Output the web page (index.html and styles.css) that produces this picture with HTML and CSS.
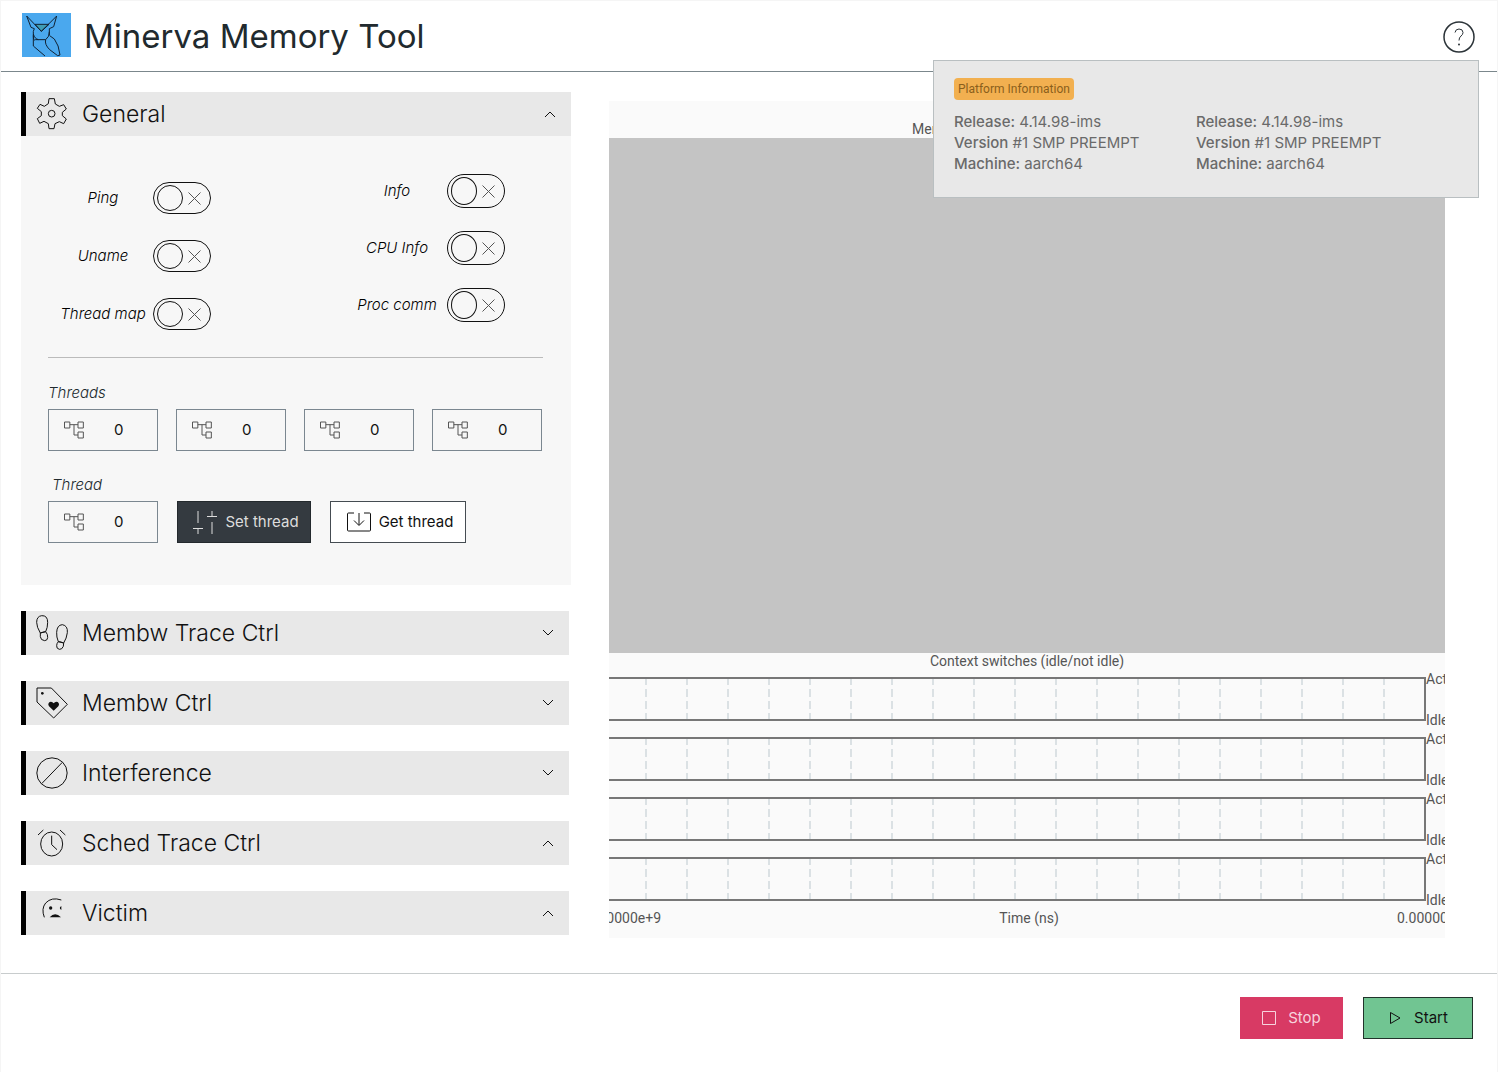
FILE: index.html
```html
<!DOCTYPE html>
<html lang="en">
<head>
<meta charset="utf-8">
<meta name="viewport" content="width=device-width, initial-scale=1">
<title>Minerva Memory Tool</title>
<link rel="stylesheet" href="styles.css">
</head>
<body>
<svg class="sprite" aria-hidden="true">
  <symbol id="tree" viewBox="0 0 60 54"><path d="M1.500 3h16v18h-16zM42 3h16v18h-16zM42 33h16v18h-16zM17.500 11H42M30 11v31h12"/></symbol>
  <symbol id="cross" viewBox="0 0 13 13"><path d="M.5.5l12 12M12.500.5l-12 12"/></symbol>
  <symbol id="down" viewBox="0 0 12 8"><path d="M1 1l5 5 5-5"/></symbol>
  <symbol id="up" viewBox="0 0 12 8"><path d="M1 7l5-5 5 5"/></symbol>
</svg>

<div class="page">
  <header class="topbar">
    <svg class="logo" viewBox="66 39 147 132" aria-hidden="true">
      <rect class="logo-bg" x="66" y="39" width="147" height="132"/>
      <path class="logo-face" d="M105 73h42l-23 21z"/>
      <path d="M80 48l13 34 10 4-3 8v44l35 30M80 48l44 46 46-46-9 32-13 6v20M100 102q4 15 16 17h21q12-9 11-24M100 106q0 18 6 13h10M137 119q-4 14 12 30l24 18 7-2q-3-30-17-48l-14-10"/>
    </svg>
    <h1 class="title">Minerva Memory Tool</h1>
    <button class="help" type="button" aria-label="Platform information">
      <svg viewBox="0 0 32 32" aria-hidden="true"><circle cx="16" cy="16" r="15"/><path d="M12 11.500q.5-3.500 4-3.500 4 0 4 3.500 0 2-2 3.500-2 1.500-2 4.500"/><circle class="dot" cx="16" cy="23.500" r="1"/></svg>
    </button>
    <aside class="popover">
      <span class="badge">Platform Information</span>
      <div class="popover-columns">
        <ul class="facts">
          <li><b>Release:</b> 4.14.98-ims</li>
          <li><b>Version</b> #1 SMP PREEMPT</li>
          <li><b>Machine:</b> aarch64</li>
        </ul>
        <ul class="facts">
          <li><b>Release:</b> 4.14.98-ims</li>
          <li><b>Version</b> #1 SMP PREEMPT</li>
          <li><b>Machine:</b> aarch64</li>
        </ul>
      </div>
    </aside>
  </header>

  <main class="content">
    <div class="panels">
      <section class="panel panel-open">
        <h2><button class="panel-head" type="button" aria-expanded="true">
          <svg class="panel-icon" viewBox="111 294 96 96" aria-hidden="true"><path d="M150 296h16l3 16 12 7 13-5 8 13-12 10v10l12 10-8 14-13-6-13 6-3 15h-15l-2-15-13-7-13 6-7-14 12-9v-12l-12-10 8-12 13 6 12-8z"/><circle cx="158" cy="341" r="10"/></svg>
          <span>General</span>
          <svg class="chevron" aria-hidden="true"><use href="#up"/></svg>
        </button></h2>
        <div class="panel-body">
          <div class="switches">
            <div class="switch-list switch-list-left">
              <label class="switch"><span>Ping</span><span class="toggle"><input type="checkbox"><svg aria-hidden="true"><use href="#cross"/></svg></span></label>
              <label class="switch"><span>Uname</span><span class="toggle"><input type="checkbox"><svg aria-hidden="true"><use href="#cross"/></svg></span></label>
              <label class="switch"><span>Thread map</span><span class="toggle"><input type="checkbox"><svg aria-hidden="true"><use href="#cross"/></svg></span></label>
            </div>
            <div class="switch-list switch-list-right">
              <label class="switch"><span>Info</span><span class="toggle"><input type="checkbox"><svg aria-hidden="true"><use href="#cross"/></svg></span></label>
              <label class="switch"><span>CPU Info</span><span class="toggle"><input type="checkbox"><svg aria-hidden="true"><use href="#cross"/></svg></span></label>
              <label class="switch"><span>Proc comm</span><span class="toggle"><input type="checkbox"><svg aria-hidden="true"><use href="#cross"/></svg></span></label>
            </div>
          </div>
          <hr class="divider">
          <div class="field">
            <label class="field-label" for="threads-1">Threads</label>
            <div class="field-row">
              <span class="number"><svg aria-hidden="true"><use href="#tree"/></svg><input id="threads-1" type="text" inputmode="numeric" value="0"></span>
              <span class="number"><svg aria-hidden="true"><use href="#tree"/></svg><input aria-label="Threads 2" type="text" inputmode="numeric" value="0"></span>
              <span class="number"><svg aria-hidden="true"><use href="#tree"/></svg><input aria-label="Threads 3" type="text" inputmode="numeric" value="0"></span>
              <span class="number"><svg aria-hidden="true"><use href="#tree"/></svg><input aria-label="Threads 4" type="text" inputmode="numeric" value="0"></span>
            </div>
          </div>
          <div class="field">
            <label class="field-label field-label-single" for="thread">Thread</label>
            <div class="field-row field-row-actions">
              <span class="number"><svg aria-hidden="true"><use href="#tree"/></svg><input id="thread" type="text" inputmode="numeric" value="0"></span>
              <button class="button button-dark" type="button">
                <svg class="button-icon" viewBox="0 0 24 24" aria-hidden="true"><path d="M5 1v12M5 19v5M0 18.500h10M19 1v5M14 6.500h10M19 12v12"/></svg>
                Set thread
              </button>
              <button class="button button-light" type="button">
                <svg class="button-icon" viewBox="0 0 24 24" aria-hidden="true"><path d="M7 3H1.500q-1 0-1 1v16q0 1 1 1h21q1 0 1-1V4q0-1-1-1H17M12 3v12M7 10.500l5 5 5-5"/></svg>
                Get thread
              </button>
            </div>
          </div>
        </div>
      </section>

      <section class="panel">
        <h2><button class="panel-head" type="button" aria-expanded="false">
          <svg class="panel-icon panel-icon-tall" viewBox="62 46 96 108" aria-hidden="true"><path d="M75 100q-11-18-11-32 0-18 15-20 18-1 18 20 0 16-6 28zM91 96q7 8 6 18-1 9-9 9-12-1-13-12v-11q8-3 16-4M129 126q-6-14-5-28 1-22 17-23 17 3 15 24-2 17-11 31zM129 126q8 0 16 4l-1 10q-4 10-12 9-9-2-8-11 0-7 5-12"/></svg>
          <span>Membw Trace Ctrl</span>
          <svg class="chevron" aria-hidden="true"><use href="#down"/></svg>
        </button></h2>
      </section>
      <section class="panel">
        <h2><button class="panel-head" type="button" aria-expanded="false">
          <svg class="panel-icon" viewBox="65 260 96 96" aria-hidden="true"><path d="M68 263h43l48 49-41 41-50-48z"/><circle class="solid" cx="84" cy="279" r="4"/><path class="solid" d="M118 331l-14-13q-5-8 2-13 7-3 12 4 5-7 12-4 7 5 2 13z"/></svg>
          <span>Membw Ctrl</span>
          <svg class="chevron" aria-hidden="true"><use href="#down"/></svg>
        </button></h2>
      </section>
      <section class="panel">
        <h2><button class="panel-head" type="button" aria-expanded="false">
          <svg class="panel-icon" viewBox="59 469 96 96" aria-hidden="true"><circle cx="107" cy="517" r="45.500"/><path d="M76 549l62-64"/></svg>
          <span>Interference</span>
          <svg class="chevron" aria-hidden="true"><use href="#down"/></svg>
        </button></h2>
      </section>
      <section class="panel">
        <h2><button class="panel-head" type="button" aria-expanded="true">
          <svg class="panel-icon" viewBox="61 77 96 96" aria-hidden="true"><ellipse cx="108" cy="128" rx="33" ry="36"/><path d="M108 103v27l16 15M67 101l16-15M133 86l16 15"/></svg>
          <span>Sched Trace Ctrl</span>
          <svg class="chevron" aria-hidden="true"><use href="#up"/></svg>
        </button></h2>
      </section>
      <section class="panel">
        <h2><button class="panel-head" type="button" aria-expanded="true">
          <svg class="panel-icon" viewBox="62 296 96 96" aria-hidden="true"><path d="M87 357q-10-26 4-43 18-19 47-9"/><circle class="solid" cx="106" cy="329" r="5"/><path class="solid" d="M138 323q-9 6 0 12zM103 357q16-18 34 0z"/></svg>
          <span>Victim</span>
          <svg class="chevron" aria-hidden="true"><use href="#up"/></svg>
        </button></h2>
      </section>
    </div>

    <section class="chart">
      <h3 class="chart-title chart-title-main">Mem</h3>
      <div class="plot"></div>
      <h3 class="chart-title">Context switches (idle/not idle)</h3>
      <div class="lanes">
        <div class="lane"><div class="track"></div><div class="states"><span>Active</span><span>Idle</span></div></div>
        <div class="lane"><div class="track"></div><div class="states"><span>Active</span><span>Idle</span></div></div>
        <div class="lane"><div class="track"></div><div class="states"><span>Active</span><span>Idle</span></div></div>
        <div class="lane"><div class="track"></div><div class="states"><span>Active</span><span>Idle</span></div></div>
      </div>
      <div class="axis">
        <span class="tick tick-start">0.00000e+9</span>
        <span>Time (ns)</span>
        <span class="tick">0.00000e+9</span>
      </div>
    </section>
  </main>

  <footer class="actions">
    <button class="button button-stop" type="button">
      <svg class="action-icon" viewBox="0 0 14 14" aria-hidden="true"><path d="M.5.5h13v13H.5z"/></svg>
      Stop
    </button>
    <button class="button button-start" type="button">
      <svg class="action-icon" viewBox="0 0 14 14" aria-hidden="true"><path d="M2.500 1.500v11L12 7z"/></svg>
      Start
    </button>
  </footer>
</div>
</body>
</html>
```

FILE: styles.css
```css
*, ::before { box-sizing: border-box; }

body {
  margin: 0;
  background: #fff;
  color: #111;
  font-family: Inter, "Liberation Sans", sans-serif;
  font-size: 15px;
  line-height: 20px;
}

h1, h2, h3, ul { margin: 0; padding: 0; font-weight: 300; }

button, input { font: inherit; color: inherit; }
button { cursor: pointer; }

svg { display: block; flex: none; fill: none; stroke: currentColor; }
.sprite { position: absolute; width: 0; height: 0; }
.solid { fill: currentColor; stroke: none; }

.page {
  display: flex;
  flex-direction: column;
  min-height: 100vh;
  border: 1px solid #f5f5f5;
  border-bottom: 0;
}

/* Top bar */
.topbar {
  position: relative;
  display: flex;
  align-items: center;
  height: 71px;
  padding: 0 22px 0 21px;
  border-bottom: 1px solid #7b878c;
}
.logo { width: 49px; height: 44px; margin-bottom: 2px; stroke: #123; stroke-width: 3; }
.logo-bg { fill: #4aa8ee; stroke: none; }
.logo-face { fill: #3f9db5; }
.title {
  margin-left: 13px;
  color: #212a2e;
  font-size: 33px;
  font-weight: 400;
  line-height: 44px;
}
.help {
  width: 32px;
  height: 32px;
  margin: 2px 0 0 auto;
  padding: 0;
  border: 0;
  background: none;
  color: #2b3338;
}
.help svg { stroke-width: 1.500; }
.help path { stroke-width: 1; }
.help .dot { fill: currentColor; stroke: none; }

.popover {
  position: absolute;
  z-index: 1;
  top: 59px;
  right: 18px;
  width: 546px;
  padding: 17px 20px 23px;
  border: 1px solid #b9bfc1;
  background: #e8e8e8;
  color: #6a6a6a;
}
.badge {
  display: inline-block;
  padding: 0 4px;
  border-radius: 4px;
  background: #f2b050;
  color: #8a5f1c;
  font-family: Roboto, "Liberation Sans", sans-serif;
  font-size: 12px;
  line-height: 22px;
}
.popover-columns {
  display: grid;
  grid-template-columns: 242px 1fr;
  margin-top: 11px;
}
.facts { list-style: none; font-size: 15px; font-weight: 400; line-height: 21px; }
.facts b { font-weight: 500; }

/* Main area */
.content {
  display: grid;
  grid-template-columns: 550fr 836fr;
  align-items: start;
  gap: 38px;
  padding: 20px 52px 35px 20px;
}
.panels { display: flex; flex-direction: column; gap: 26px; }
.panel { margin-right: 2px; }
.panel-open { margin-right: 0; background: #f7f7f7; }
.panel-head {
  display: flex;
  align-items: center;
  gap: 14px;
  width: 100%;
  height: 44px;
  padding: 0 15px 0 10px;
  border: 0;
  border-left: 5px solid #000;
  background: #e8e8e8;
  color: #111;
  font-size: 23px;
  font-weight: 300;
  text-align: left;
}
.panel-icon { width: 32px; height: 32px; stroke-width: 3; }
.panel-icon-tall { height: 36px; }
.chevron { width: 12px; height: 8px; margin-left: auto; }

.panel-body { padding: 38px 28px 42px 27px; }
.switches { display: flex; gap: 145px; padding-left: 14px; }
.switch-list { display: grid; align-content: start; }
.switch-list-left { gap: 26px; padding-top: 8px; }
.switch-list-right { gap: 23px; }
.switch {
  display: grid;
  grid-template-columns: 82px 58px;
  gap: 9px;
  align-items: center;
  color: #000;
  font-style: italic;
  font-weight: 300;
  text-align: center;
  white-space: nowrap;
}
.switch > span:first-child { justify-self: center; }
.toggle { display: grid; grid-template-columns: 58px; height: 32px; }
.switch-list-right .toggle { height: 34px; }
.toggle > * { grid-area: 1 / 1; }
.toggle input {
  display: flex;
  align-items: center;
  width: 58px;
  height: 100%;
  margin: 0;
  padding: 0 3px;
  border: 1px solid #111;
  border-radius: 17px;
  appearance: none;
}
.toggle input::before {
  content: "";
  width: 26px;
  height: calc(100% - 4px);
  border: 1px solid #111;
  border-radius: 50%;
}
.toggle input:checked { justify-content: flex-end; }
.toggle svg {
  align-self: center;
  width: 13px;
  height: 13px;
  margin-left: 35px;
  color: #555;
  pointer-events: none;
}

.divider { margin: 27px 0 25px; border: 0; border-top: 1px solid #bbb; }

.field + .field { margin-top: 24px; }
.field-label { display: block; color: #212a2e; font-style: italic; font-weight: 300; }
.field-label-single { padding-left: 4px; }
.field-row { display: flex; gap: 18px; margin-top: 6px; }
.field-row-actions { gap: 19px; }
.number {
  display: flex;
  align-items: center;
  gap: 30px;
  width: 110px;
  height: 42px;
  padding-left: 15px;
  border: 1px solid #7b8790;
}
.number svg { width: 20px; height: 18px; stroke-width: 3; color: #555; }
.number input {
  width: 100%;
  min-width: 0;
  padding: 0;
  border: 0;
  outline: 0;
  background: none;
}

.button {
  display: flex;
  align-items: center;
  height: 42px;
  border: 1px solid;
  padding: 0;
  justify-content: center;
  white-space: nowrap;
}
.button-icon { width: 24px; height: 24px; margin: 0 8px 0 4px; }
.button-dark { width: 134px; border-color: #23292d; background: #343a40; color: #ddd; }
.button-light { width: 136px; border-color: #454c52; background: #fff; color: #111; }

/* Chart */
.chart {
  margin-top: 9px;
  padding-bottom: 12px;
  overflow: hidden;
  background: #fafafa;
  color: #555;
  font-family: Roboto, "Liberation Sans", sans-serif;
  font-size: 14px;
  line-height: 16px;
}
.chart-title { height: 24px; font-size: 14px; font-weight: 400; text-align: center; }
.chart-title-main { height: 37px; padding: 20px 0 0 303px; text-align: left; }
.plot { height: 515px; background: #c4c4c4; }
.lanes { display: grid; gap: 16px; }
.lane { display: grid; grid-template-columns: 1fr 19px; height: 44px; }
.track {
  margin-left: -3px;
  border: 2px solid #777;
  border-left: 0;
  background:
    repeating-linear-gradient(transparent 0 8px, #fafafa 8px 12px),
    linear-gradient(to left, #dbe1e4 2px, transparent 2px) right / 5% 100%;
  background-origin: border-box;
}
.states {
  display: flex;
  flex-direction: column;
  justify-content: space-between;
  margin: -6px 0 -7px;
  overflow: hidden;
}
.axis { display: flex; justify-content: space-between; padding-top: 9px; }
.tick { width: 48px; overflow: hidden; }
.tick-start { display: flex; justify-content: flex-end; width: 52px; }

/* Footer */
.actions {
  display: flex;
  flex: 1;
  align-items: flex-start;
  justify-content: flex-end;
  gap: 20px;
  padding: 23px 24px;
  border-top: 1px solid #c8cccd;
}
.action-icon { width: 14px; height: 14px; margin-right: 12px; }
.button-stop { width: 103px; border-color: #d83a64; background: #d83a64; color: #f7d3dd; }
.button-start { width: 110px; border-color: #21332b; background: #71c592; color: #111; }
```
